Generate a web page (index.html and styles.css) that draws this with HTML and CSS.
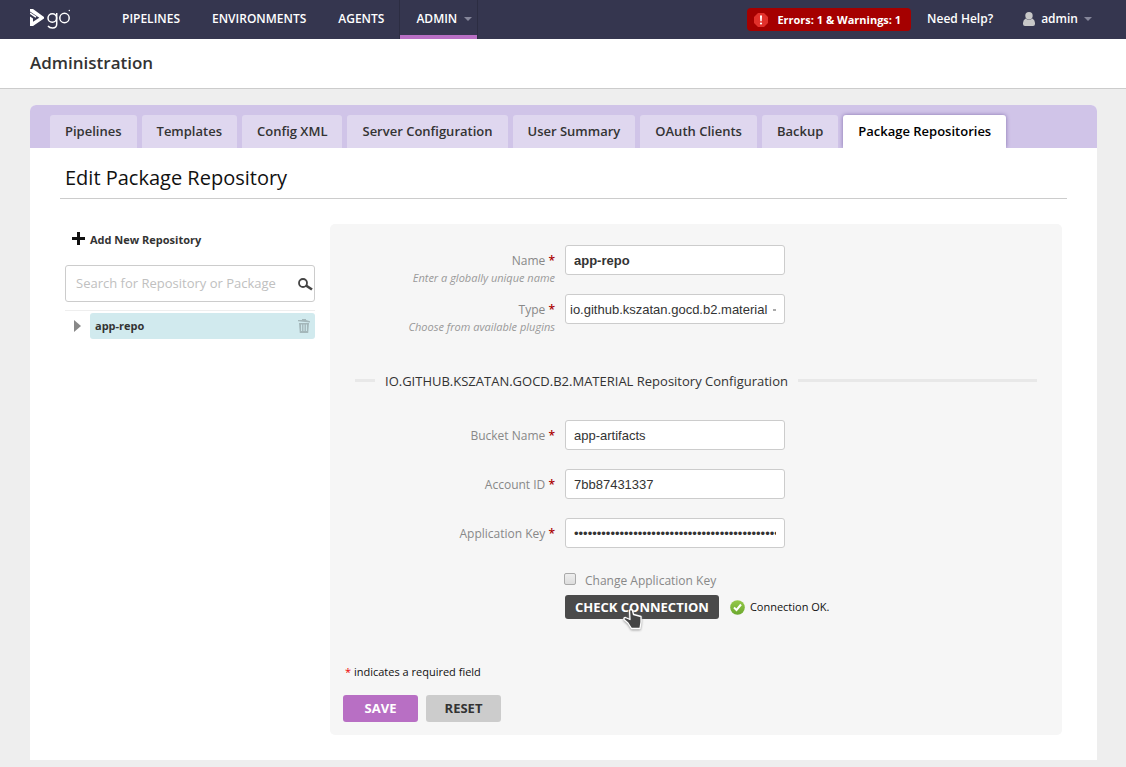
FILE: index.html
```html
<!DOCTYPE html>
<html lang="en">
<head>
<meta charset="utf-8">
<title>Administration - Package Repositories</title>
<link rel="stylesheet" href="styles.css">
</head>
<body>
<header class="topbar">
  <a class="logo" href="#" aria-label="Go">
    <svg width="42" height="22" viewBox="0 0 42 22" aria-hidden="true">
      <path d="M0 1L3 1L14 9L14 10.500L3 18H0V8.500L3 10.500V13.800L9.300 9.700L0 3.500Z" fill="#fff"/>
      <path d="M0 5L6 9.200" stroke="#fff" stroke-width="1.500"/>
      <g fill="none" stroke="#fff" stroke-width="1.500">
        <circle cx="22.300" cy="10" r="4.300"/>
        <path d="M26.700 5V16Q26.700 20 22.500 20Q19.500 20 18 18"/>
        <circle cx="34.500" cy="10" r="4.700"/>
      </g>
      <circle cx="39.300" cy="2.500" r=".7" fill="#fff"/>
    </svg>
  </a>
  <nav class="mainnav">
    <a href="#">PIPELINES</a>
    <a href="#">ENVIRONMENTS</a>
    <a href="#">AGENTS</a>
    <a href="#" class="current">ADMIN <span class="caret"></span></a>
  </nav>
  <div class="userbar">
    <button type="button" class="errors">
      <svg width="14" height="14" viewBox="0 0 14 14" aria-hidden="true">
        <path d="M4 0H10L14 4V10L10 14H4L0 10V4Z" fill="#e2302b"/>
        <path d="M6 2.500H8L7.700 8.300H6.300Z" fill="#fff"/>
        <circle cx="7" cy="10.500" r="1.100" fill="#fff"/>
      </svg>
      Errors: 1 &amp; Warnings: 1
    </button>
    <a href="#" class="help">Need Help?</a>
    <a href="#" class="user">
      <svg width="12" height="14" viewBox="0 0 12 14" aria-hidden="true">
        <circle cx="6" cy="3.700" r="3.700" fill="#c8c8c8"/>
        <path d="M2.500 6.500Q6 9 9.500 6.500Q12 8 12 11V12Q12 14 10 14H2Q0 14 0 12V11Q0 8 2.500 6.500Z" fill="#c8c8c8"/>
      </svg>
      admin <span class="caret"></span>
    </a>
  </div>
</header>
<div class="pagehead"><h1>Administration</h1></div>
<main class="card">
  <nav class="tabs">
    <a href="#">Pipelines</a>
    <a href="#">Templates</a>
    <a href="#">Config XML</a>
    <a href="#">Server Configuration</a>
    <a href="#">User Summary</a>
    <a href="#">OAuth Clients</a>
    <a href="#">Backup</a>
    <a href="#" class="selected">Package Repositories</a>
  </nav>
  <h2>Edit Package Repository</h2>
  <div class="columns">
    <aside class="sidebar">
      <a href="#" class="add">
        <svg width="13" height="13" viewBox="0 0 13 13" aria-hidden="true"><path d="M5 0H8V5H13V8H8V13H5V8H0V5H5Z" fill="#111"/></svg>
        Add New Repository
      </a>
      <div class="search">
        <input type="search" aria-label="Search repositories" placeholder="Search for Repository or Package">
        <svg width="16" height="14" viewBox="0 0 16 14" aria-hidden="true">
          <circle cx="6" cy="6" r="4" fill="none" stroke="#444" stroke-width="1.800"/>
          <path d="M9 8.500L15 12.500" stroke="#444" stroke-width="2.600"/>
        </svg>
      </div>
      <ul class="tree">
        <li>
          <button type="button" class="expand" aria-label="Expand app-repo"></button>
          <div class="node">
            <a href="#">app-repo</a>
            <button type="button" class="trash" aria-label="Delete app-repo">
              <svg width="12" height="14" viewBox="0 0 12 14" aria-hidden="true">
                <path d="M0 1L4 1V0H8V1L12 2.200V3.500L0 2.200Z" fill="#a4b7ba"/>
                <path d="M1 4H11L10.200 14H1.800Z" fill="#a4b7ba"/>
                <path d="M3.600 5.500V12M6 5.500V12M8.400 5.500V12" stroke="#d1eaee" stroke-width="1"/>
              </svg>
            </button>
          </div>
        </li>
      </ul>
    </aside>
    <form class="panel">
      <div class="row">
        <label for="name">Name <b>*</b><em>Enter a globally unique name</em></label>
        <input id="name" class="strong" type="text" value="app-repo">
      </div>
      <div class="row">
        <label for="type">Type <b>*</b><em>Choose from available plugins</em></label>
        <select id="type"><option>io.github.kszatan.gocd.b2.material</option></select>
      </div>
      <fieldset>
        <legend>IO.GITHUB.KSZATAN.GOCD.B2.MATERIAL Repository Configuration</legend>
      </fieldset>
      <div class="row">
        <label for="bucket">Bucket Name <b>*</b></label>
        <input id="bucket" type="text" value="app-artifacts">
      </div>
      <div class="row">
        <label for="account">Account ID <b>*</b></label>
        <input id="account" type="text" value="7bb87431337">
      </div>
      <div class="row">
        <label for="key">Application Key <b>*</b></label>
        <input id="key" type="password" value="00000000000000000000000000000000000000000000000000">
      </div>
      <div class="change">
        <input id="change" type="checkbox">
        <label for="change">Change Application Key</label>
      </div>
      <div class="check">
        <button type="button" class="btn dark">CHECK CONNECTION
          <svg class="pointer" width="22" height="22" viewBox="0 0 22 22" aria-hidden="true">
            <path d="M7.500 2.500Q9 .5 10.500 2.500L11.500 6.500L19 8.500V14L18 20.500H9.500L6 15L2 11.500Q1.500 9.500 3.500 9.500L8 11.500Z" fill="#444" stroke="#fff" stroke-width="1.300" stroke-linejoin="round"/>
          </svg>
        </button>
        <svg width="15" height="15" viewBox="0 0 15 15" aria-hidden="true">
          <defs><linearGradient id="ok" x2="0" y2="1"><stop stop-color="#96c94b"/><stop offset="1" stop-color="#6ba82d"/></linearGradient></defs>
          <circle cx="7.500" cy="7.500" r="7.300" fill="url(#ok)"/>
          <path d="M4 7.500L6.500 10L11 4.500" fill="none" stroke="#fff" stroke-width="2"/>
        </svg>
        <span>Connection OK.</span>
      </div>
      <p class="note"><b>*</b> indicates a required field</p>
      <div class="actions">
        <button type="submit" class="btn primary">SAVE</button>
        <button type="reset" class="btn">RESET</button>
      </div>
    </form>
  </div>
</main>
</body>
</html>
```
FILE: styles.css
```css
* { box-sizing: border-box; }
body { margin: 0; background: #eee; color: #333; font-family: "Open Sans", sans-serif; font-size: 12px; line-height: 18px; }
a { color: inherit; text-decoration: none; }
svg { display: block; flex: none; }
button { font-family: inherit; border: 0; cursor: pointer; }

.topbar { display: flex; height: 39px; padding: 0 34px 0 30px; background: #35364f; color: #fff; font-weight: 600; }
.logo { margin-top: 8px; width: 76px; }
.mainnav { display: flex; }
.mainnav a { padding: 10px 16px; white-space: nowrap; }
.mainnav .current { display: flex; align-items: center; gap: 7px; padding: 6px 5px 4px 16px; border-bottom: 4px solid #b86fc4; box-shadow: -1px 0 #2c2d42, 1px 0 #2c2d42; }
.caret { border: 4px solid transparent; border-top-color: #85869a; border-bottom: 0; }
.userbar { display: flex; align-items: center; margin-left: auto; padding-bottom: 2px; }
.errors { display: flex; align-items: center; gap: 9px; height: 23px; margin: 2px 16px 0 0; padding: 0 10px 0 7px; border-radius: 4px; background: #a50000; color: #fff; font-size: 11px; font-weight: 700; }
.help { margin-right: 30px; }
.user { display: flex; align-items: center; gap: 6px; }

.pagehead { padding: 12px 30px 13px; background: #fff; border-bottom: 1px solid #ccc; }
h1 { margin: 0; font-size: 17px; font-weight: 600; line-height: 24px; }

.card { margin: 16px 29px 7px 30px; padding-bottom: 25px; background: #fff; border-radius: 6px 6px 0 0; }
.tabs { display: flex; gap: 5px; padding: 10px 20px 0; background: #d0c4e8; border-radius: 6px 6px 0 0; font-size: 13px; font-weight: 600; overflow: hidden; }
.tabs a { padding: 7px 15px 8px; background: #dfd7ef; border-radius: 3px 3px 0 0; white-space: nowrap; }
.tabs .selected { background: #fff; color: #000; box-shadow: 0 0 4px #8672b0; }
h2 { margin: 0 30px 25px; padding: 16px 5px 6px; border-bottom: 1px solid #ccc; color: #111; font-size: 20px; font-weight: 400; line-height: 28px; }
.columns { display: flex; gap: 15px; padding: 0 35px; }

.sidebar { flex: 0 0 250px; }
.add { display: flex; align-items: center; gap: 5px; padding: 7px 7px 16px; font-size: 11px; font-weight: 700; }
.add svg { margin-bottom: 3px; }
.search { display: flex; align-items: center; height: 37px; padding: 0 1px 0 10px; background: #fff; border: 1px solid #ccc; border-radius: 3px; }
.search input { flex: 1; min-width: 0; padding: 0 0 2px; border: 0; outline: 0; background: none; font: 13px "Open Sans", sans-serif; }
.search input::placeholder { color: #c0c0c0; }
.tree { margin: 8px 0 0; padding: 2px 0 0; border-top: 1px solid #eee; list-style: none; }
.tree li { display: flex; align-items: center; }
.expand { width: 7px; height: 12px; margin: 0 9px; padding: 0; background: #888; clip-path: polygon(0 0, 100% 50%, 0 100%); }
.node { display: flex; flex: 1; align-items: center; justify-content: space-between; padding: 4px 5px; background: #d1eaee; border-radius: 3px; font-size: 11px; font-weight: 700; }
.trash { padding: 0; background: none; }

.panel { flex: 1; padding: 21px 13px 13px; background: #f6f6f6; border-radius: 5px; }
.row { display: flex; gap: 10px; height: 30px; margin-bottom: 19px; }
.row label { width: 212px; padding-top: 7px; color: #888; text-align: right; }
.row b { color: #a00; font-weight: 600; }
.row em { display: block; color: #999; font-size: 11px; line-height: 16px; }
.row input, .row select { width: 220px; height: 30px; padding: 0 8px; background: #fff; border: 1px solid #ccc; border-radius: 3px; color: #333; font: 13px "Liberation Sans", Arial, sans-serif; }
.row .strong { font-weight: 700; }
.row select { padding: 0 4px; appearance: none; background: linear-gradient(#aaa, #aaa) no-repeat 207px 14px / 3px 2px #fff; }
fieldset { margin: 46px 12px 30px; padding: 0; border: 0; border-top: 3px solid #e8e8e8; }
legend { margin-left: 20px; padding: 2px 10px 0; font-size: 13px; }
.change { display: flex; align-items: center; gap: 9px; margin: 24px 0 5px 221px; color: #888; }
.change input { appearance: none; width: 12px; height: 12px; margin: 0 0 4px; border: 1px solid #aaa; border-radius: 2px; background: linear-gradient(#eee, #ddd); }
.check { display: flex; align-items: center; margin-left: 222px; color: #111; font-size: 11px; }
.check svg { margin-right: 5px; }
.btn { min-width: 75px; height: 27px; padding: 0 0 1px; border-radius: 3px; background: #ccc; color: #333; font-size: 13px; font-weight: 700; line-height: 24px; }
.primary { background: #b86fc4; color: #fff; }
.dark { position: relative; height: 24px; margin-right: 11px; padding: 0 10px; background: #4a4a4a; color: #fff; line-height: 22px; }
.dark .pointer { position: absolute; top: 13px; left: 57px; margin: 0; filter: drop-shadow(0 1px 1px #999); }
.note { margin: 44px 2px 14px; color: #111; font-size: 11px; }
.note b { color: #e00; font-weight: 400; }
.actions { display: flex; gap: 8px; }
```
